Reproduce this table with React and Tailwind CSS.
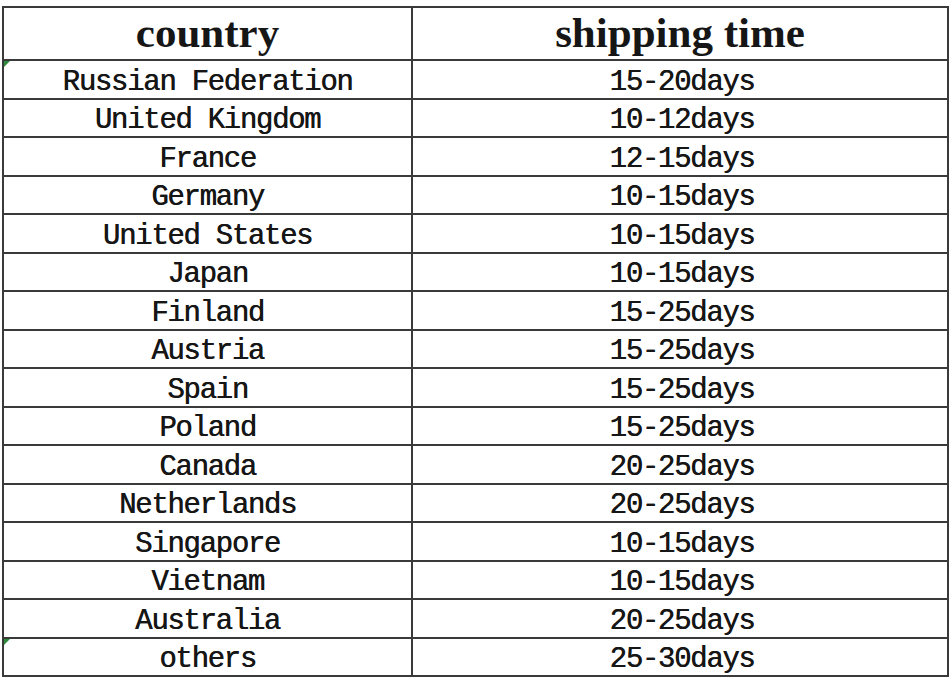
const ROWS = [
  ['Russian Federation', '15-20days', true],
  ['United Kingdom', '10-12days'],
  ['France', '12-15days'],
  ['Germany', '10-15days'],
  ['United States', '10-15days'],
  ['Japan', '10-15days'],
  ['Finland', '15-25days'],
  ['Austria', '15-25days'],
  ['Spain', '15-25days'],
  ['Poland', '15-25days'],
  ['Canada', '20-25days'],
  ['Netherlands', '20-25days'],
  ['Singapore', '10-15days'],
  ['Vietnam', '10-15days'],
  ['Australia', '20-25days'],
  ['others', '25-30days', true],
];

function Marker() {
  // little green comment marker in the cell corner
  return (
    <svg className="absolute left-0 top-0" width="6" height="6" viewBox="0 0 6 6">
      <polygon points="0,0 6,0 0,6" fill="#2e8b3e" />
    </svg>
  );
}

export default function App() {
  return (
    <div className="bg-white w-[950px] h-[679px] pt-[6px] pl-[2px] text-[#161616]">
      <div className="w-[947px] border-t-2 border-l-2 border-r-2 border-[#3a3a3a]">
        <div className="grid grid-cols-[409px_1fr] h-[53px] border-b-2 border-[#3a3a3a] font-['Liberation_Serif',serif] font-bold text-[43px] leading-none">
          <div className="border-r-2 border-[#3a3a3a] flex items-center justify-center pb-[2px]">country</div>
          <div className="flex items-center justify-center pb-[2px]">shipping time</div>
        </div>
        {ROWS.map(([country, time, mark]) => (
          <div
            key={country}
            className="grid grid-cols-[409px_1fr] h-[38.5px] border-b-2 border-[#3a3a3a] font-['Liberation_Mono',monospace] text-[29px] tracking-[-1.3px] leading-none [text-shadow:0.5px_0_0_#161616]"
          >
            <div className="relative border-r-2 border-[#3a3a3a] flex items-center justify-center pt-[6px]">
              {mark && <Marker />}
              {country}
            </div>
            <div className="flex items-center justify-center pt-[6px] pl-[4px]">{time}</div>
          </div>
        ))}
      </div>
    </div>
  );
}
